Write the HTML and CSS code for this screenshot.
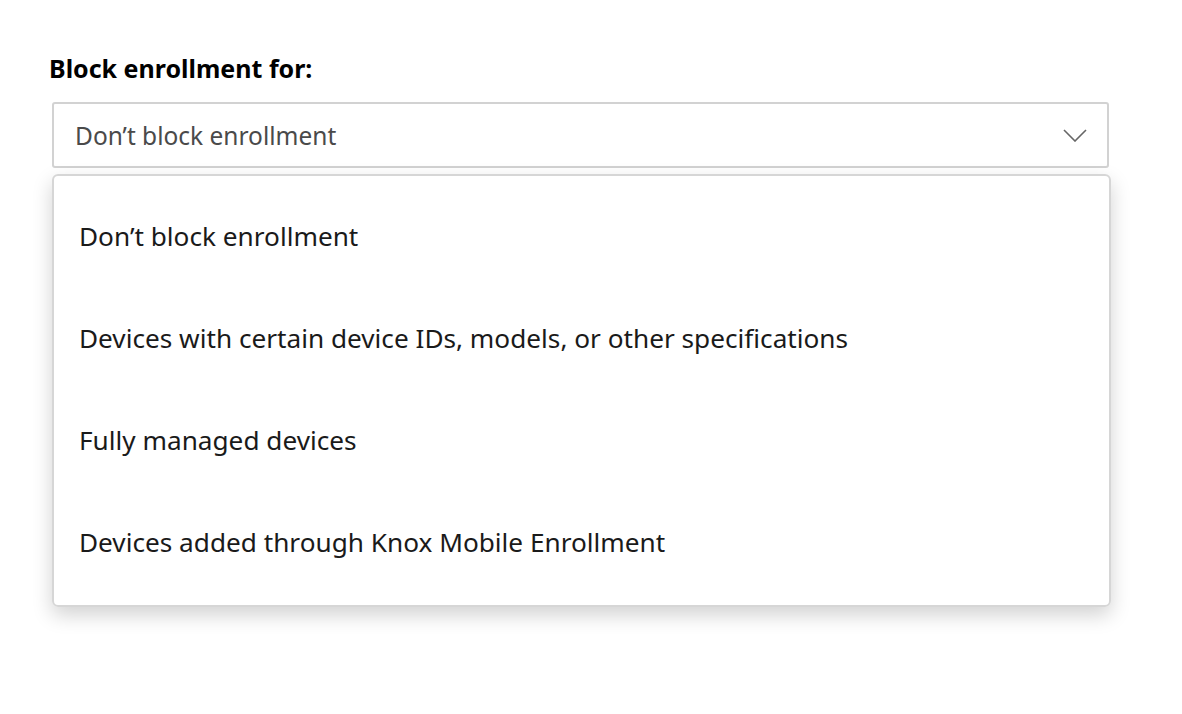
FILE: index.html
```html
<!DOCTYPE html>
<html lang="en">
<head>
<meta charset="utf-8">
<title>Block enrollment</title>
<link rel="stylesheet" href="styles.css">
</head>
<body>
<div class="field">
  <div class="label">Block enrollment for:</div>
  <div class="select">
    <span class="select-value">Don’t block enrollment</span>
    <svg class="chevron" width="24" height="13" viewBox="0 0 24 13"><path d="M1 1 L12 12 L23 1" fill="none" stroke="#666" stroke-width="1.6"/></svg>
  </div>
  <ul class="menu">
    <li class="option">Don’t block enrollment</li>
    <li class="option">Devices with certain device IDs, models, or other specifications</li>
    <li class="option">Fully managed devices</li>
    <li class="option">Devices added through Knox Mobile Enrollment</li>
  </ul>
</div>
</body>
</html>
```
FILE: styles.css
```css
html, body {
  margin: 0;
  padding: 0;
  background: #fff;
}
body {
  font-family: "Noto Sans", "Open Sans", sans-serif;
}
.field {
  width: 1058px;
  padding: 51px 0 40px 52px;
}
.label {
  font-size: 25px;
  font-weight: 700;
  color: #000;
  margin-left: -3px;
  line-height: 34px;
  margin-bottom: 17px;
}
.select {
  box-sizing: border-box;
  width: 1057px;
  height: 66px;
  border: 2px solid #d2d2d2;
  border-radius: 3px;
  display: flex;
  align-items: center;
  justify-content: space-between;
  padding: 0 20px 0 21px;
}
.select-value {
  font-size: 24.5px;
  color: #4a4a4a;
}
.chevron {
  display: block;
}
.menu {
  list-style: none;
  margin: 6px 0 0 0;
  padding: 9px 0 12px 0;
  box-sizing: border-box;
  width: 1059px;
  border: 2px solid #d6d6d6;
  border-radius: 6px;
  box-shadow: 0 8px 20px rgba(0,0,0,0.18);
}
.option {
  height: 102px;
  display: flex;
  align-items: center;
  padding-left: 25px;
  font-size: 26.2px;
  color: #1a1a1a;
}
```
